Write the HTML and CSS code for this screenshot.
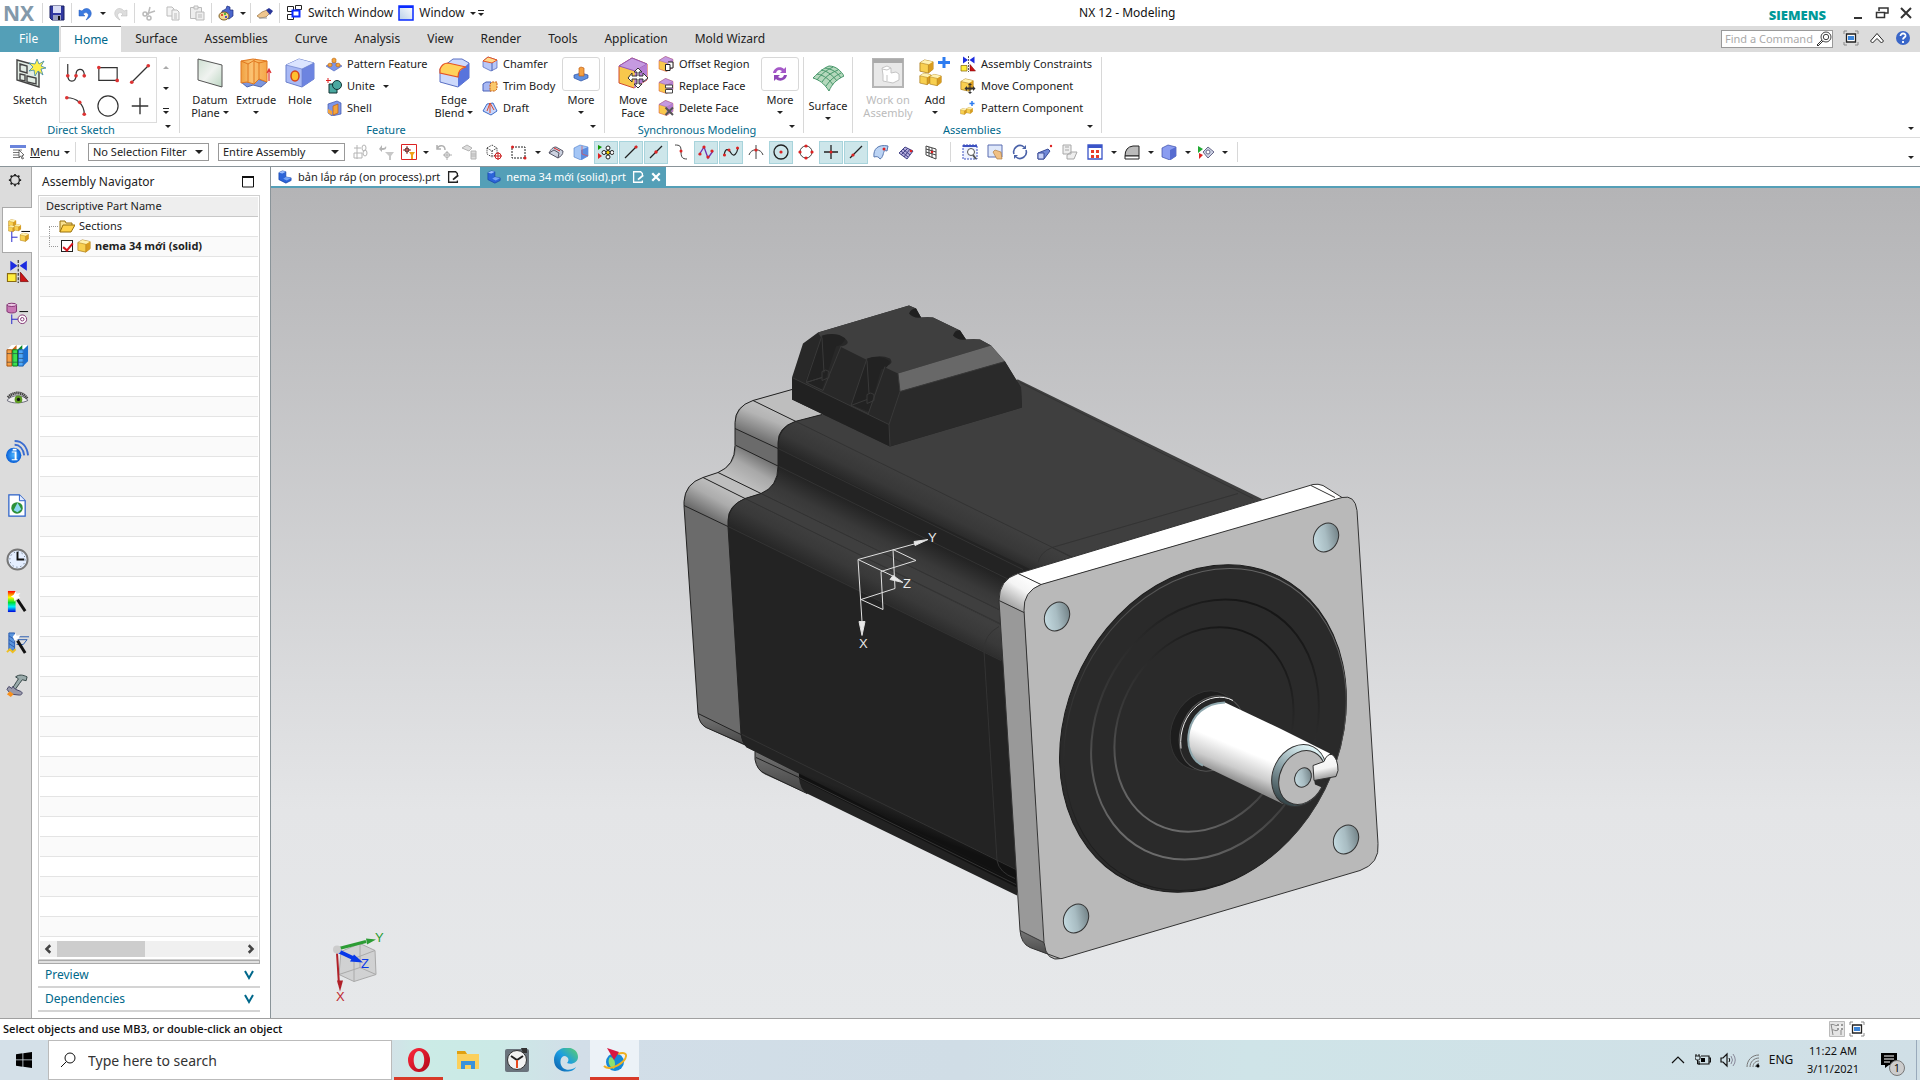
FILE: index.html
```html
<!DOCTYPE html>
<html lang="en">
<head>
    <meta charset="utf-8">
    <title>NX 12 - Modeling</title>
    <link rel="stylesheet" href="styles.css">
</head>
<body>

    <!-- icon sprite -->
    <svg class="sprite" aria-hidden="true">
        <defs>
            <linearGradient id="gGold" x1="0" y1="0" x2="1" y2="1"><stop offset="0" stop-color="#fff0a8"/><stop offset="1" stop-color="#eaa22c"/></linearGradient>
            <linearGradient id="gOrange" x1="0" y1="0" x2="1" y2="0"><stop offset="0" stop-color="#f0a040"/><stop offset=".4" stop-color="#fbc272"/><stop offset="1" stop-color="#f5a84a"/></linearGradient>
            <linearGradient id="gRain" x1="0" y1="0" x2="0" y2="1"><stop offset="0" stop-color="#f00"/><stop offset=".3" stop-color="#ff0"/><stop offset=".55" stop-color="#0d3"/><stop offset=".75" stop-color="#0ef"/><stop offset="1" stop-color="#00d"/></linearGradient>
            <linearGradient id="gPlane" x1="0" y1="0" x2="1" y2="1"><stop offset="0" stop-color="#cfe0d2"/><stop offset=".5" stop-color="#f0f3f0"/><stop offset="1" stop-color="#bcd6c2"/></linearGradient>
            <linearGradient id="gEdge" x1="0" y1="1" x2="1" y2="0"><stop offset="0" stop-color="#0c59a4"/><stop offset=".5" stop-color="#1b9de2"/><stop offset="1" stop-color="#5fd068"/></linearGradient>
            <linearGradient id="gOpera" x1="0" y1="0" x2="1" y2="1"><stop offset="0" stop-color="#ff2a3c"/><stop offset="1" stop-color="#b00818"/></linearGradient>
            <linearGradient id="gWin" x1="0" y1="1" x2="1" y2="0"><stop offset="0" stop-color="#b8cfe8"/><stop offset="1" stop-color="#fff"/></linearGradient>
            <radialGradient id="gInfo"><stop offset="0" stop-color="#49b4ff"/><stop offset="1" stop-color="#0a5fd6"/></radialGradient>
        </defs>

        <symbol id="save" viewBox="0 0 16 16"><path d="M1 1h14v14H3l-2-2z" fill="#3038a0" stroke="#1a2060"/><path d="M4 1h8v7H4z" fill="#d8dcf4"/><path d="M4 10h8v5H4z" fill="#9aa0c0"/><path d="M9 11h2v4H9z" fill="#111"/></symbol>
        <symbol id="undo" viewBox="0 0 16 16"><path d="M4 6c3-4 8-3 9 1 1 3-1 6-5 8 3-4 3-6 1-7-1-1-3 0-4 1l2 2-6 0V5z" fill="#3a7ae0" stroke="#2558b8" stroke-width=".5"/></symbol>
        <symbol id="redo" viewBox="0 0 16 16"><path d="M12 6C9 2 4 3 3 7c-1 3 1 6 5 8-3-4-3-6-1-7 1-1 3 0 4 1l-2 2h6V5z" fill="#ddd" stroke="#bbb" stroke-width=".5"/></symbol>
        <symbol id="cut" viewBox="0 0 16 16"><g fill="none" stroke="#bbb" stroke-width="1.500"><path d="M9 2L7 10M14 6L5 9"/><circle cx="4" cy="9" r="2"/><circle cx="8" cy="13" r="2"/></g></symbol>
        <symbol id="copy" viewBox="0 0 16 16"><g fill="#f4f4f4" stroke="#bbb"><path d="M2 2h5l2 2v7H2z"/><path d="M7 5h5l2 2v8H7z"/><path d="M9 9h3M9 11h3M9 13h3"/></g></symbol>
        <symbol id="paste" viewBox="0 0 16 16"><g fill="#eee" stroke="#bbb"><path d="M1.500 2.500h11v11h-11z"/><path d="M5 1h4v3H5zM7 7h8v8H7z"/><path d="M9 10h4M9 12h4"/></g></symbol>
        <symbol id="cyl" viewBox="0 0 16 16"><path d="M9 1l3 1v3h3v6l-4 3-7-3V6l4-2z" fill="#4a66cc" stroke="#1c2c80" stroke-width=".7"/><ellipse cx="6" cy="11" rx="5" ry="4" fill="#f0d890" stroke="#7a5a20"/><circle cx="4" cy="10" r="1" fill="#d22"/><circle cx="7" cy="9" r="1" fill="#2a2"/><circle cx="8" cy="12" r="1" fill="#22c"/></symbol>
        <symbol id="hand" viewBox="0 0 16 16"><path d="M0 11l5-4 5-2 3 3-4 4-6 1z" fill="#efc68e" stroke="#97703f" stroke-width=".7"/><path d="M9 5l3-2 4 3-3 4z" fill="#2a3798"/><path d="M2 13h8" stroke="#999"/></symbol>
        <symbol id="switch" viewBox="0 0 16 16"><g fill="#fff" stroke="#222"><path d="M.5 1.500h6v5h-6zM.5 9.500h6v5h-6zM8.500.500h6v4h-6z"/><path d="M5.500 5.500h7v6h-7z" stroke="#0a2bff" stroke-width="2"/></g></symbol>
        <symbol id="win" viewBox="0 0 16 16"><path d="M1 1h14v14H1z" fill="url(#gWin)" stroke="#0a2bff" stroke-width="1.500"/><path d="M1 1h14v2H1z" fill="#0a2bff"/></symbol>

        <symbol id="sketch" viewBox="0 0 32 32"><path d="M3 3l22 6v21L3 23z" fill="#e2ece4" stroke="#444" stroke-width="1.400"/><path d="M6 7l7 2v7l-7-2zM6 17l5 1v6l-5-1zM13 19l9 2v6l-9-2z" fill="none" stroke="#444" stroke-width="1.400"/><path d="M23 2l2 5 5-3-3 5 5 2-5 1 2 6-5-4-3 5-1-6-5 1 4-4-4-4 6 1z" fill="#fff04a" stroke="#3b88a8" stroke-width=".8"/></symbol>
        <symbol id="profile" viewBox="0 0 24 24"><path d="M3 1v12c0 9 9 9 9 0 0-8 8-8 9-1v2" fill="none" stroke="#333" stroke-width="1.300"/><circle cx="3" cy="14" r="2" fill="#d33"/><circle cx="12" cy="14" r="2" fill="#d33"/><circle cx="21" cy="14" r="2" fill="#d33"/></symbol>
        <symbol id="rect" viewBox="0 0 24 24"><path d="M2 5h20v14H2z" fill="none" stroke="#333" stroke-width="1.300"/><circle cx="2" cy="5" r="2" fill="#d33"/><circle cx="22" cy="19" r="2" fill="#d33"/></symbol>
        <symbol id="line" viewBox="0 0 24 24"><path d="M3 21L21 3" fill="none" stroke="#333" stroke-width="1.300"/><circle cx="3" cy="21" r="2" fill="#d33"/><circle cx="21" cy="3" r="2" fill="#d33"/></symbol>
        <symbol id="arc" viewBox="0 0 24 24"><path d="M2 3c11 0 19 7 19 18" fill="none" stroke="#333" stroke-width="1.300"/><circle cx="2" cy="3" r="2" fill="#d33"/><circle cx="16" cy="8" r="2" fill="#d33"/><circle cx="21" cy="21" r="2" fill="#d33"/></symbol>
        <symbol id="circle" viewBox="0 0 24 24"><circle cx="12" cy="12" r="11" fill="none" stroke="#333" stroke-width="1.300"/></symbol>
        <symbol id="point" viewBox="0 0 24 24"><path d="M12 3v18M3 12h18" stroke="#333" stroke-width="1.500"/></symbol>
        <symbol id="datum" viewBox="0 0 32 32"><path d="M4 2l24 6v22L4 23z" fill="url(#gPlane)" stroke="#555"/></symbol>
        <symbol id="extrude" viewBox="0 0 32 32"><path d="M1 25l13-4 13 4-6 5-8-2-6 2z" fill="#7d96dc" stroke="#5068b0"/><path d="M1 4l12-2 14 2v21l-8-3-5 5-7-2-6 1z" fill="url(#gOrange)" stroke="#e07820"/><path d="M1 4l7 3 5-3 3-2M8 7v19M14 4v22M19 5v17M14 4l5 2 8-2" fill="none" stroke="#e07820"/><path d="M29 24V13m-2 3l2-4 2 4" fill="none" stroke="#d33" stroke-width="1.200"/></symbol>
        <symbol id="cube" viewBox="0 0 32 32"><path d="M2 8l13-6 15 4v16l-12 8-16-5z" fill="#a9b9f4" stroke="#6b80cc"/><path d="M2 8l13-6 15 4-12 6z" fill="#dbe4ff"/><path d="M18 12l12-6v16l-12 8z" fill="#6d84e0"/><path d="M2 8l16 4v18M18 12l12-6" fill="none" stroke="#6b80cc" stroke-width=".7"/></symbol>
        <symbol id="hole" viewBox="0 0 32 32"><use href="#cube"/><ellipse cx="11" cy="19" rx="4" ry="5" fill="#ffc02e" stroke="#d84318" stroke-width="1.500"/></symbol>
        <symbol id="blend" viewBox="0 0 32 32"><path d="M2 12L15 2h9l7 4v15l-11 9L2 25z" fill="#cdd9fb" stroke="#5a70c4"/><path d="M20 16L31 6v15l-11 9z" fill="#5874dc"/><path d="M2 12c2-5 5-6 8-6l18 4c-5 1-8 4-8 10L2 16z" fill="#ffd25c" stroke="#e65324" stroke-width="1.200"/></symbol>
        <symbol id="pattern" viewBox="0 0 16 16"><path d="M0 10l8-4 8 4-8 5z" fill="#7d96e8" stroke="#4b62b8" stroke-width=".6"/><g fill="#f4a43c" stroke="#b86410" stroke-width=".6"><path d="M6 3l2-1 2 1v3L8 7 6 6zM2 8l2-1 2 1v2l-2 1-2-1zM10 8l2-1 2 1v2l-2 1-2-1z"/></g></symbol>
        <symbol id="unite" viewBox="0 0 16 16"><path d="M3 6h8v9H3z" fill="#4aa8a0" stroke="#133"/><circle cx="11" cy="7" r="4.500" fill="#4aa8a0" stroke="#133"/><path d="M2 0v5M0 2.500h5" stroke="#d22"/></symbol>
        <symbol id="shell" viewBox="0 0 16 16"><path d="M2 4l9-3 4 2v11l-9 2-4-3z" fill="#7d96e8" stroke="#3d53a8" stroke-width=".7"/><path d="M7 6l5-2v9l-5 2z" fill="#f4a43c" stroke="#b8601a" stroke-width=".7"/><path d="M2 9l4 2v4l-4-2z" fill="#f4a43c"/></symbol>
        <symbol id="chamfer" viewBox="0 0 16 16"><path d="M1 5l5-4 9 3v8l-6 3-8-4z" fill="#b8c7f8" stroke="#4b62b8" stroke-width=".7"/><path d="M1 5l5-4 9 3-5 3z" fill="#ffd98a" stroke="#e65324"/><path d="M10 7v8" stroke="#4b62b8"/></symbol>
        <symbol id="trim" viewBox="0 0 16 16"><path d="M1 6l3-2h5v9H1z" fill="#a9b9f4" stroke="#4b62b8"/><path d="M8 6l2-2h5v7l-2 2H8z" fill="#fac86c" stroke="#c65a14" stroke-dasharray="2 1"/></symbol>
        <symbol id="draft" viewBox="0 0 16 16"><path d="M1 11L5 4l6-1 4 8-6 4z" fill="#c8d6fc" stroke="#3d6cc8"/><path d="M8 3v10M8 3l-3 8M8 3l4 7" stroke="#e04a28" fill="none"/></symbol>
        <symbol id="boss" viewBox="0 0 16 16"><path d="M1 9l7-2 7 2v3l-7 3-7-3z" fill="#5f8fdf" stroke="#2b4fa0" stroke-width=".7"/><path d="M6 2l2-1 3 1v8H6z" fill="#f5a142" stroke="#c06018" stroke-width=".7"/></symbol>

        <symbol id="mface" viewBox="0 0 32 32"><path d="M2 9l13-8 15 6v16l-13 8L2 26z" fill="#f8c84c" stroke="#d04a30"/><path d="M2 9l13-8 15 6-12 7z" fill="#c59ae0" stroke="#9458b8"/><path d="M18 14l12-7v16l-13 8z" fill="#b47cd4"/></symbol>
        <symbol id="moveface" viewBox="0 0 32 32"><use href="#mface"/><path d="M21 11l4 4h-3v4h4v-3l5 5-5 4v-3h-4v5h3l-4 4-4-4h3v-5h-5v3l-4-4 4-5v3h5v-4h-3z" fill="#fff" stroke="#333"/></symbol>
        <symbol id="offset" viewBox="0 0 32 32"><use href="#mface"/><path d="M15 17h9v12h-9zM20 12h10v12h-6" fill="#fff" stroke="#222" stroke-width="2"/></symbol>
        <symbol id="replace" viewBox="0 0 32 32"><use href="#mface"/><path d="M15 14h14v6H15zM15 23h14v7H15z" fill="#fff" stroke="#444" stroke-width="2"/></symbol>
        <symbol id="delface" viewBox="0 0 32 32"><use href="#mface"/><path d="M15 15l15 15M30 15L15 30" stroke="#555" stroke-width="4"/></symbol>
        <symbol id="cycle" viewBox="0 0 16 16"><path d="M1 7c1-6 8-7 11-4l2-2v6H8l2-2c-3-2-5-1-6 2z" fill="#a558c8"/><path d="M15 9c-1 6-8 7-11 4l-2 2V9h6l-2 2c3 2 5 1 6-2z" fill="#9048b8"/></symbol>
        <symbol id="surf" viewBox="0 0 32 32"><path d="M1 15C8 8 12 5 17 3c7 0 12 5 15 10-8 4-12 8-15 15C12 20 7 17 1 15z" fill="#b4d8bc" stroke="#46966a"/><path d="M5 11c7 1 13 6 16 11M9 7c7 1 12 6 16 11M13 5c7 1 12 4 16 10M5 17C10 10 15 7 21 4M10 19c4-6 9-9 16-12M14 23c4-6 9-10 15-13" fill="none" stroke="#46966a"/></symbol>
        <symbol id="workon" viewBox="0 0 32 32"><path d="M1 2h30v28H1z" fill="#e8e8e8" stroke="#b5b5b5" stroke-width="2"/><path d="M1 2h30v4H1z" fill="#aaa"/><path d="M10 11l5-2 4 2v5l5-1 3 2v6l-6 3-10-2V18z" fill="#fff" stroke="#c4c4c4"/><path d="M15 18v6M10 12l5 1 4-2" stroke="#c4c4c4" fill="none"/></symbol>
        <symbol id="gcube" viewBox="0 0 16 16"><path d="M1 4l5-3 9 2v8l-5 4-9-2z" fill="#f8d050" stroke="#a87818" stroke-width=".8"/><path d="M1 4l5-3 9 2-5 3z" fill="#fff2b0"/><path d="M10 6l5-3v8l-5 4z" fill="#d89c20"/><path d="M1 4l9 2v9" fill="none" stroke="#a87818" stroke-width=".6"/></symbol>
        <symbol id="add" viewBox="0 0 32 32"><use href="#gcube" x="0" y="2" width="15" height="15"/><use href="#gcube" x="0" y="15" width="13" height="14"/><use href="#gcube" x="10" y="16" width="13" height="14"/><path d="M25 0v11M19 5.500h12" stroke="#2e7cf0" stroke-width="3"/></symbol>
        <symbol id="constr" viewBox="0 0 32 32"><path d="M6 1l10 7-10 7zM29 1L19 8l10 7z" fill="#1c2ce0"/><path d="M17 0v32" stroke="#222" stroke-width="1.500" stroke-dasharray="4 2"/><path d="M2 19h12v11H2z" fill="#ffee3c" stroke="#8a6a10" stroke-width="1.500"/><path d="M20 17v13h11z" fill="#cc1414" stroke="#700"/></symbol>
        <symbol id="movecomp" viewBox="0 0 16 16"><use href="#gcube" width="14" height="14"/><path d="M10 5l2 2h-1.500v2.500H13V8l2.500 2.500L13 13v-1.500h-2.500V14H12l-2 2-2-2h1.500v-2.500H7V13l-2.500-2.500L7 8v1.500h2.500V7H8z" fill="#333"/></symbol>
        <symbol id="pattcomp" viewBox="0 0 16 16"><use href="#gcube" y="8" width="7" height="7"/><use href="#gcube" x="6" y="7" width="7" height="7"/><path d="M12 1v5M9.500 3.500h5" stroke="#2e7cf0" stroke-width="1.500"/></symbol>

        <symbol id="menu" viewBox="0 0 16 16"><path d="M0 1h16v3H0z" fill="#6a84dc"/><path d="M3 6h9M3 8.500h7M3 11h7M3 13.500h7" stroke="#777"/><path d="M9 6l5 5-2 .5 1.500 3-1.500.5-1-3-2 1z" fill="#fff" stroke="#333" stroke-width=".7"/></symbol>
        <symbol id="s1" viewBox="0 0 16 16"><g fill="none" stroke="#b4b4b4"><path d="M1 4h7M4 1v14M1 9h8v5H1z"/><ellipse cx="11" cy="4" rx="2" ry="3"/><ellipse cx="12" cy="9" rx="2" ry="3"/></g></symbol>
        <symbol id="s2" viewBox="0 0 16 16"><path d="M1 5l3-4v3c2 0 3 0 4-2 1 3-1 4-4 4v2z" fill="#b4b4b4"/><path d="M7 8h9l-3 4v4h-2v-4z" fill="#c8c8c8"/></symbol>
        <symbol id="s3" viewBox="0 0 16 16"><path d="M.5.500h15v15H.500z" fill="#fff" stroke="#d22"/><path d="M6 2v8M2 6h8" stroke="#a22"/><circle cx="6" cy="6" r="2" fill="none" stroke="#422"/><path d="M8 8h6l-2 3v4h-2v-4z" fill="#f0a018"/></symbol>
        <symbol id="s4" viewBox="0 0 16 16"><path d="M1 5c2-5 8-4 8 1M1 1v4h4" stroke="#b0b0b0" stroke-width="1.500" fill="none"/><path d="M11 7v9M7 11h9" stroke="#b0b0b0"/><circle cx="11" cy="11" r="2.500" fill="none" stroke="#b0b0b0"/></symbol>
        <symbol id="s5" viewBox="0 0 16 16"><path d="M1 4l5-3 5 3-3 3zM10 7h5v8h-5zM10 10h5M10 12h5" fill="#ddd" stroke="#b4b4b4"/></symbol>
        <symbol id="s6" viewBox="0 0 16 16"><path d="M1 4l5-3 5 3v6l-5 3-5-3zM1 4l5 3 5-3M6 7v6" fill="none" stroke="#222" stroke-dasharray="1 1"/><circle cx="12" cy="12" r="3" fill="#fff" stroke="#c22"/><path d="M12 8v8M8 12h8" stroke="#c22"/></symbol>
        <symbol id="s7" viewBox="0 0 16 16"><path d="M1 3h13v11H1z" fill="none" stroke="#222" stroke-dasharray="2 1"/><circle cx="1.500" cy="3" r="1.500" fill="#d22"/><circle cx="14" cy="14" r="1.500" fill="#d22"/></symbol>
        <symbol id="s8" viewBox="0 0 16 16"><path d="M1 9c2-4 4-6 7-6l7 4c0 4-2 5-5 7z" fill="#ccd2e0" stroke="#556"/><path d="M1 9l5-3 5 3-1 5" fill="none" stroke="#556"/><path d="M6 4l6 3" stroke="#d22"/></symbol>
        <symbol id="s9" viewBox="0 0 16 16"><path d="M1 4l6-3 8 2v9l-7 4-7-3z" fill="#a4c6f6" stroke="#4878c8" stroke-width=".6"/><path d="M8 6l7-3v9l-7 4z" fill="#5c8ce0"/><path d="M9 2v8M9 10l6 2" stroke="#e05050" stroke-width=".7"/></symbol>
        <symbol id="s10" viewBox="0 0 16 16"><path d="M0 1l4 2-4 3z" fill="#190"/><path d="M0 9l4 3-4 3z" fill="#d22"/><g fill="#fff" stroke="#222"><circle cx="10" cy="4" r="2"/><circle cx="10" cy="13" r="2"/><circle cx="6" cy="8.500" r="2"/><circle cx="14" cy="8.500" r="2"/></g><circle cx="10" cy="8.500" r="2" fill="#fd0" stroke="#222"/></symbol>
        <symbol id="s11" viewBox="0 0 16 16"><path d="M2 14L14 2" stroke="#222" stroke-width="1.200"/><circle cx="13" cy="3" r="1.600" fill="#d22"/></symbol>
        <symbol id="s12" viewBox="0 0 16 16"><path d="M2 14L14 2" stroke="#222" stroke-width="1.200"/><circle cx="8" cy="8" r="1.700" fill="#d22"/></symbol>
        <symbol id="s13" viewBox="0 0 16 16"><path d="M2 1c5 0 6 1 6 6 0 6 1 8 6 8" stroke="#444" fill="none"/><circle cx="8" cy="7" r="1.500" fill="#d22"/></symbol>
        <symbol id="s14" viewBox="0 0 16 16"><path d="M1 11L6 3l4 11 5-7" stroke="#7030b0" fill="none" stroke-width="1.300"/><g fill="#d22"><circle cx="2" cy="10" r="1.600"/><circle cx="6" cy="3" r="1.600"/><circle cx="10" cy="13" r="1.600"/><circle cx="14" cy="7" r="1.600"/></g></symbol>
        <symbol id="s15" viewBox="0 0 16 16"><path d="M1 12C2 4 5 4 8 9s6 0 7-5" stroke="#222" fill="none" stroke-width="1.200"/><g fill="#d22"><circle cx="1.500" cy="11" r="1.500"/><circle cx="6" cy="6" r="1.500"/><circle cx="14.500" cy="4" r="1.500"/></g></symbol>
        <symbol id="s16" viewBox="0 0 16 16"><path d="M1 11c2-7 12-7 14 0M8 1v14" stroke="#444" fill="none"/><circle cx="8" cy="6" r="1.600" fill="#d22"/></symbol>
        <symbol id="s17" viewBox="0 0 16 16"><circle cx="8" cy="8" r="7" stroke="#222" fill="none" stroke-width="1.300"/><circle cx="8" cy="8" r="1.600" fill="#d22"/></symbol>
        <symbol id="s18" viewBox="0 0 16 16"><circle cx="8" cy="8" r="6" stroke="#444" fill="none"/><g fill="#d22"><circle cx="8" cy="2" r="1.600"/><circle cx="8" cy="14" r="1.600"/><circle cx="2" cy="8" r="1.600"/><circle cx="14" cy="8" r="1.600"/></g></symbol>
        <symbol id="s19" viewBox="0 0 16 16"><path d="M8 1v14M1 8h14" stroke="#222" stroke-width="1.300"/><circle cx="8" cy="8" r="1.500" fill="#d22"/></symbol>
        <symbol id="s20" viewBox="0 0 16 16"><path d="M2 14L14 2" stroke="#222" stroke-width="1.200"/><circle cx="5" cy="11" r="1.600" fill="#d22"/></symbol>
        <symbol id="s21" viewBox="0 0 16 16"><path d="M1 13C0 5 5 0 15 2l-1 5c-3-1-3 0-4 4-1 2-1 3-3 4-1-2-3-3-6-2z" fill="#bcd4f4" stroke="#5878b0"/><circle cx="11" cy="5" r="1.500" fill="#d22"/></symbol>
        <symbol id="s22" viewBox="0 0 16 16"><path d="M1 9l6-6 8 4-6 8z" fill="#b4acdc" stroke="#448"/><path d="M3 7l7 6M5 5l7 6M3 11l7-7M6 13l6-8" stroke="#448"/><circle cx="13" cy="7" r="1.300" fill="#d22"/></symbol>
        <symbol id="s23" viewBox="0 0 16 16"><path d="M3 2l10 3v10L3 11zM6 3v9M9 4v10M3 5l10 3M3 8l10 3" stroke="#444" fill="none"/><circle cx="9" cy="8" r="1.300" fill="#d22"/></symbol>
        <symbol id="v1" viewBox="0 0 16 16"><path d="M1 1h14v14H1z" fill="#eef2ff" stroke="#3c50c0" stroke-dasharray="2 1"/><path d="M1 1h14v2H1z" fill="#3c50c0"/><circle cx="9" cy="8" r="3.500" fill="#fff" stroke="#555"/><path d="M11 11l3 4" stroke="#555" stroke-width="2"/></symbol>
        <symbol id="v2" viewBox="0 0 16 16"><path d="M1 1h14v12H1z" fill="#dfe8fa" stroke="#5a6cb0"/><path d="M6 8l2-2 6 2 1 7h-5z" fill="#f0c084" stroke="#a87030" stroke-width=".6"/></symbol>
        <symbol id="v3" viewBox="0 0 16 16"><path d="M2 10C0 4 7-1 12 3M14 6c2 6-5 11-10 7" fill="none" stroke="#4a62a8" stroke-width="1.600"/><path d="M10 5h4V1zM6 11H2v4z" fill="#4a62a8"/></symbol>
        <symbol id="v4" viewBox="0 0 16 16"><path d="M1 9l10-4 2 2-6 8H1z" fill="#7088d8" stroke="#3a4c98"/><path d="M1 9h6v6H1z" fill="#c8d2f8" stroke="#3a4c98"/><circle cx="14" cy="2" r="1.200" fill="#d22"/></symbol>
        <symbol id="v5" viewBox="0 0 16 16"><path d="M1 1h8v9H1zM5 11l4-3h6l-3 7H5zM3 3h4M3 6h4" fill="#eee" stroke="#a8a8a8"/></symbol>
        <symbol id="v6" viewBox="0 0 16 16"><path d="M1 1h14v14H1z" fill="#fff" stroke="#3a54c8" stroke-width="1.300"/><path d="M1 1h14v3H1z" fill="#3a54c8"/><path d="M4 6h3v3H4zM9 6h3v3H9zM4 11h3v3H4zM9 11h3v3H9z" fill="#e83a28"/></symbol>
        <symbol id="v7" viewBox="0 0 16 16"><path d="M1 12q0-9 8-10h6v10z" fill="#bbb" stroke="#222"/><path d="M1 12h14v3H1z" fill="#fff" stroke="#222"/></symbol>
        <symbol id="v8" viewBox="0 0 16 16"><path d="M1 4l6-3 8 2v9l-6 4-8-3z" fill="#8a9cf0" stroke="#3a4ca8" stroke-width=".7"/><path d="M9 6l6-3v9l-6 4z" fill="#566cd0"/></symbol>
        <symbol id="v9" viewBox="0 0 16 16"><path d="M0 2l5 3-5 4z" fill="#2a3"/><path d="M1 9l4 2-4 4z" fill="#d22"/><path d="M5 8l5-5 6 5-6 6z" fill="#ccd2e4" stroke="#668"/><circle cx="10" cy="8" r="2" fill="#fff" stroke="#668"/></symbol>

        <symbol id="gear" viewBox="0 0 16 16"><circle cx="8" cy="8" r="5" fill="none" stroke="#222" stroke-width="1.500"/><path d="M8 1v2M8 13v2M1 8h2M13 8h2M3 3l1.500 1.500M11.500 11.500L13 13M3 13l1.500-1.500M11.500 4.500L13 3" stroke="#222" stroke-width="2"/></symbol>
        <symbol id="asmnav" viewBox="0 0 24 24"><use href="#gcube" x="1" y="0" width="9" height="9"/><use href="#gcube" x="1" y="6" width="8" height="8"/><use href="#gcube" x="7" y="5" width="8" height="8"/><use href="#gcube" x="13" y="14" width="10" height="10"/><path d="M5 13v11M5 19h6" stroke="#22c" fill="none"/><path d="M15 13h9" stroke="#000"/></symbol>
        <symbol id="partnav" viewBox="0 0 24 24"><path d="M1 3v7c2 2 8 2 10 0V3z" fill="#c878b4" stroke="#803070"/><ellipse cx="6" cy="3" rx="5" ry="1.700" fill="#ecc8e4" stroke="#803070"/><path d="M6 13v10M6 18h7" stroke="#22c"/><path d="M14 10h9" stroke="#000"/><circle cx="17" cy="18" r="4.500" fill="#fff" stroke="#803070"/><circle cx="17" cy="18" r="1.800" fill="none" stroke="#803070"/></symbol>
        <symbol id="books" viewBox="0 0 24 24"><path d="M1 6l5-5h17v17l-6 5H1z" fill="#fff"/><path d="M1 6h5v17H1z" fill="#f4a048" stroke="#a85008"/><path d="M6 6l5-5v4l-5 5z" fill="#c86818"/><path d="M7 6h5v17H7z" fill="#3ce050" stroke="#087818"/><path d="M12 6l5-5v4l-5 5z" fill="#0c8828"/><path d="M13 6h5v17h-5z" fill="#50a8f8" stroke="#1458a8"/><path d="M18 6l5-5v17l-5 5z" fill="#1c70d0"/><path d="M1 10h5M7 10h5M13 10h5M1 19h5M7 19h5M13 15h5M13 19h5" stroke="#234" stroke-opacity=".6"/></symbol>
        <symbol id="eye" viewBox="0 0 24 24"><path d="M1 15C6 9 17 8 23 15c-5 3-17 4-22 0z" fill="#eee" stroke="#667"/><path d="M2 12C7 6 17 5 22 13" fill="none" stroke="#444" stroke-width="3" stroke-dasharray="1.500 .5"/><circle cx="13" cy="14" r="4" fill="#5c9a20"/><circle cx="13" cy="14" r="1.700" fill="#111"/></symbol>
        <symbol id="info" viewBox="0 0 24 24"><circle cx="8" cy="16" r="8" fill="url(#gInfo)"/><path d="M6 13h3v7H6v1h6v-1h-1v-8H6zM7 9h4v2H7z" fill="#fff"/><path d="M9 5c5 0 9 4 10 11M9 1c8 0 13 6 14 15" stroke="#3a6cd0" stroke-width="2" fill="none"/></symbol>
        <symbol id="webdoc" viewBox="0 0 24 24"><path d="M3 1h11l6 6v16H3z" fill="#fff" stroke="#2a60c8" stroke-width="1.300"/><path d="M14 1v6h6" fill="#e0eaff" stroke="#2a60c8"/><circle cx="11.500" cy="14.500" r="6" fill="#2c9038"/><path d="M12 9l4 7-4 3-4-2z" fill="#8cd8f0"/></symbol>
        <symbol id="clock" viewBox="0 0 24 24"><circle cx="12" cy="12" r="10.500" fill="#e4eeff" stroke="#777" stroke-width="2"/><path d="M12 4v8h7" fill="none" stroke="#111" stroke-width="2"/><circle cx="12" cy="12" r="8" fill="none" stroke="#456" stroke-dasharray="1 3.200"/></symbol>
        <symbol id="palette" viewBox="0 0 24 24"><path d="M2 1h8v22H2z" fill="url(#gRain)"/><path d="M10 1l1 3 4-1-2 3 2 2-4 1-2 3-1-4-3-1 3-2z" fill="#fff"/><path d="M12 10l8 12" stroke="#111" stroke-width="3"/></symbol>
        <symbol id="mill" viewBox="0 0 24 24"><path d="M3 1h6v18H3z" fill="#5a94dc" stroke="#2a5cb0"/><path d="M3 4l6 4M3 8l6 4M3 12l6 4M11 5h13M12 8h10l-4 5h-7" stroke="#2a5cb0" fill="none"/><path d="M1 21l3-3 3 3 3-3" stroke="#f0c020" stroke-width="2" fill="none"/><path d="M10 1l1 3 4-1-2 4-4 2-2-4z" fill="#fff"/><path d="M12 9l8 13" stroke="#111" stroke-width="3"/></symbol>
        <symbol id="tools" viewBox="0 0 24 24"><path d="M10 3c4-3 8-2 12 0l-1 4-4-1-3 4-5 7-3-1 5-8 2-3z" fill="#9aa" stroke="#344"/><path d="M1 16l2-3 3 2 1-2 3 3 5 2c3 1 2 4-1 4L5 21z" fill="#99a" stroke="#446"/><path d="M1 21l3-3 4 3-3 3z" fill="#f8901c"/></symbol>
        <symbol id="folder" viewBox="0 0 16 16"><path d="M1 14V3h5l1 2h6v3" fill="#f8e090" stroke="#98700c"/><path d="M1 14l3-7h12l-4 7z" fill="#ffd24a" stroke="#98700c"/></symbol>
        <symbol id="part" viewBox="0 0 16 16"><path d="M1 3l4-2 4 1v6l6 1v3l-6 3-8-4z" fill="#2c64d8" stroke="#1440a0" stroke-width=".7"/><path d="M1 3l4-2 4 1-4 2z" fill="#9cc0ff"/><path d="M6 10l3-2 6 1-5 3z" fill="#74a4f8"/></symbol>
        <symbol id="docedit" viewBox="0 0 16 16"><path d="M13 6V4l-2-2H3v12h10v-2" fill="none" stroke="currentColor" stroke-width="1.500"/><path d="M8 11l6-5" stroke="currentColor" stroke-width="2"/></symbol>
        <symbol id="full" viewBox="0 0 16 16"><path d="M1 4V1h3M12 1h3v3M15 12v3h-3M4 15H1v-3" fill="none" stroke="#888"/><path d="M3.500 4h9v8h-9z" fill="#fff" stroke="#222" stroke-width="1.300"/><path d="M5 6h6v4H5z" fill="#3a84d8"/></symbol>
        <symbol id="flag" viewBox="0 0 16 16"><path d="M.5.500h15v15H.500z" fill="#e4e4e4" stroke="#bbb"/><path d="M4 14L2 3M2 4c3-2 4 2 7 0v5c-3 2-4-1-6 0M12 14V4" fill="none" stroke="#888"/><path d="M8 3h6v6H8z" fill="#999"/><path d="M10 3h2v2h2v2h-2v2h-2V7H8V5h2z" fill="#eee"/></symbol>
        <symbol id="magnify" viewBox="0 0 16 16"><circle cx="10" cy="6" r="5" fill="none" stroke="#444"/><circle cx="10" cy="6" r="2.700" fill="none" stroke="#444"/><path d="M6 9l-5 5 1 1 5-5" fill="#fff" stroke="#333"/></symbol>
        <symbol id="help" viewBox="0 0 16 16"><circle cx="8" cy="8" r="7" fill="#3a66c8"/><path d="M5.500 6c0-3.500 5.500-3.200 5 0-.3 1.500-2.500 1.800-2.500 3.500M8 11v2" stroke="#fff" stroke-width="1.800" fill="none"/></symbol>
        <symbol id="collapse" viewBox="0 0 16 16"><path d="M1.500 11L8 3.500l6.500 7.500-2 2L8 8.500 3.500 13z" fill="#fff" stroke="#222"/></symbol>
        <symbol id="minimize" viewBox="0 0 16 16"><path d="M4 13h8" stroke="#333" stroke-width="2"/></symbol>
        <symbol id="restore" viewBox="0 0 16 16"><path d="M5 6V3h9v5h-3M2.500 7.500h8v5h-8z" fill="none" stroke="#333" stroke-width="1.500"/></symbol>
        <symbol id="close" viewBox="0 0 16 16"><path d="M3 3l10 10M13 3L3 13" stroke="#333" stroke-width="2"/></symbol>
        <symbol id="maxi" viewBox="0 0 16 16"><path d="M2.500 3h11v10h-11z" fill="none" stroke="#111" stroke-width="1"/><path d="M2 3h12" stroke="#111" stroke-width="2"/></symbol>

        <symbol id="start" viewBox="0 0 16 16"><path d="M0 2.300L6.500 1.300v6.200H0zM7.300 1.200L16 0v7.500H7.300zM0 8.300h6.500v6.400L0 13.700zM7.300 8.300H16V16l-8.700-1.200z"/></symbol>
        <symbol id="find" viewBox="0 0 16 16"><circle cx="10" cy="6" r="5" fill="none" stroke="#111"/><path d="M6.500 9.500L1 15" stroke="#111"/></symbol>
        <symbol id="opera" viewBox="0 0 24 24"><path fill-rule="evenodd" fill="url(#gOpera)" d="M12 0a11 12 0 1 1 0 24a11 12 0 1 1 0-24zm0 3c-7 0-7 18 0 18s7-18 0-18z"/></symbol>
        <symbol id="explorer" viewBox="0 0 24 24"><path d="M1 3h8l2 3h12v15H1z" fill="#fbd05c"/><path d="M1 3h8l2 3H1z" fill="#e0a010"/><path d="M5 13h14v8h-4v-4H9v4H5z" fill="#3a92dc"/></symbol>
        <symbol id="alarm" viewBox="0 0 24 24"><rect y="1" width="24" height="23" rx="2" fill="#6a737c"/><path d="M16 0h6v5h-4z" fill="#333"/><circle cx="12" cy="12" r="9.500" fill="#f2f2f2" stroke="#333"/><path d="M6 8l6 4 6-4" stroke="#222" stroke-width="2" fill="none"/><path d="M12 12v8" stroke="#e8481c" stroke-width="2"/></symbol>
        <symbol id="edge" viewBox="0 0 24 24"><path d="M0 12C0-4 24-4 24 9c0 6-7 8-11 6 3-3 1-7-3-7-4 1-5 8-1 12 4 3 9 2 13-1-3 7-22 7-22-7z" fill="url(#gEdge)"/></symbol>
        <symbol id="nx" viewBox="0 0 24 24"><circle cx="12" cy="14" r="9" fill="#1488d8"/><path d="M7 9c5 1 6 6 4 12-5-2-7-8-4-12z" fill="#8ce070"/><path d="M1 18C7 24 24 14 23 7c-1-3-6-2-8-1" fill="none" stroke="#f0b020" stroke-width="2"/><path d="M4 0l12 4-5 8z" fill="#d81840"/></symbol>
        <symbol id="up" viewBox="0 0 16 16"><path d="M2 11l6-6 6 6" fill="none" stroke="#111" stroke-width="1.200"/></symbol>
        <symbol id="battery" viewBox="0 0 16 16"><path d="M6 4h8v8H4V9M14 6h1.500v4H14" fill="none" stroke="#111" stroke-width="1.200"/><path d="M6 6h4v4H6z"/><path d="M0 4h5v2c0 2-1 2-2 2S0 8 0 6zM1 2v2M4 2v2M2.500 8v4H5" fill="none" stroke="#111"/></symbol>
        <symbol id="volume" viewBox="0 0 16 16"><path d="M1 6h2l4-4v12l-4-4H1z" fill="none" stroke="#111" stroke-width="1.200"/><path d="M9 6q1.500 2 0 4" fill="none" stroke="#111"/><path d="M11 4q3 4 0 8M13 2q4.500 6 0 12" fill="none" stroke="#889"/></symbol>
        <symbol id="wifi" viewBox="0 0 16 16"><path d="M2 15C2 8 7 3 14 3M5 15c0-5 4-9 9-9M8 15c0-4 3-6 6-6" fill="none" stroke="#777"/><path d="M11 15c0-2 1-3 3-3" fill="none" stroke="#111"/><circle cx="13" cy="14" r="1.500"/></symbol>
        <symbol id="note" viewBox="0 0 16 16"><path d="M0 1h16v12H8l-4 3v-3H0z"/><path d="M3 4h10M3 7h10M3 10h6" stroke="#fff"/></symbol>
    </svg>

    <header class="titlebar">
        <span class="logo">NX</span>
        <span class="vline"></span>
        <button class="tool" aria-label="Save"><svg><use href="#save"/></svg></button>
        <span class="vline"></span>
        <button class="tool" aria-label="Undo"><svg><use href="#undo"/></svg></button>
        <button class="drop" aria-label="Undo list"></button>
        <button class="tool" aria-label="Redo"><svg><use href="#redo"/></svg></button>
        <span class="vline"></span>
        <button class="tool" aria-label="Cut"><svg><use href="#cut"/></svg></button>
        <button class="tool" aria-label="Copy"><svg><use href="#copy"/></svg></button>
        <button class="tool" aria-label="Paste"><svg><use href="#paste"/></svg></button>
        <span class="vline"></span>
        <button class="tool" aria-label="Repeat Command"><svg><use href="#cyl"/></svg></button>
        <button class="drop" aria-label="Repeat list"></button>
        <span class="vline"></span>
        <button class="tool" aria-label="Touch"><svg><use href="#hand"/></svg></button>
        <span class="vline"></span>
        <button class="texttool"><svg><use href="#switch"/></svg>Switch Window</button>
        <button class="texttool"><svg><use href="#win"/></svg>Window<i class="caret"></i></button>
        <button class="drop bar" aria-label="Toolbar options"></button>
        <h1>NX 12 - Modeling</h1>
        <span class="siemens">SIEMENS</span>
        <button class="winbtn" aria-label="Minimize"><svg><use href="#minimize"/></svg></button>
        <button class="winbtn" aria-label="Restore"><svg><use href="#restore"/></svg></button>
        <button class="winbtn" aria-label="Close"><svg><use href="#close"/></svg></button>
    </header>

    <nav class="tabs">
        <a class="file" href="#file">File</a>
        <a class="active" href="#home">Home</a>
        <a href="#surface">Surface</a>
        <a href="#assemblies">Assemblies</a>
        <a href="#curve">Curve</a>
        <a href="#analysis">Analysis</a>
        <a href="#view">View</a>
        <a href="#render">Render</a>
        <a href="#tools-tab">Tools</a>
        <a href="#application">Application</a>
        <a href="#mold">Mold Wizard</a>
        <div class="finder">
            <input type="text" placeholder="Find a Command" aria-label="Find a Command">
            <svg><use href="#magnify"/></svg>
        </div>
        <button class="winbtn" aria-label="Full Screen"><svg><use href="#full"/></svg></button>
        <button class="winbtn" aria-label="Minimize Ribbon"><svg><use href="#collapse"/></svg></button>
        <button class="winbtn" aria-label="Help"><svg><use href="#help"/></svg></button>
    </nav>

    <section class="ribbon">
        <div class="group g-sketch">
            <div class="items">
                <button class="big w58"><svg><use href="#sketch"/></svg>Sketch</button>
                <div class="gallery">
                    <button aria-label="Profile"><svg><use href="#profile"/></svg></button>
                    <button aria-label="Rectangle"><svg><use href="#rect"/></svg></button>
                    <button aria-label="Line"><svg><use href="#line"/></svg></button>
                    <button aria-label="Arc"><svg><use href="#arc"/></svg></button>
                    <button aria-label="Circle"><svg><use href="#circle"/></svg></button>
                    <button aria-label="Point"><svg><use href="#point"/></svg></button>
                </div>
                <div class="scroller">
                    <button class="drop flip" aria-label="Scroll up"></button>
                    <button class="drop" aria-label="Scroll down"></button>
                    <button class="drop bar" aria-label="More shapes"></button>
                </div>
            </div>
            <div class="label">Direct Sketch<i class="caret"></i></div>
        </div>
        <div class="group g-feature">
            <div class="items">
                <button class="big w46"><svg><use href="#datum"/></svg>Datum<span>Plane<i class="caret"></i></span></button>
                <button class="big w46"><svg><use href="#extrude"/></svg>Extrude<i class="caret"></i></button>
                <button class="big w42"><svg><use href="#hole"/></svg>Hole</button>
                <div class="list l1">
                    <button><svg><use href="#pattern"/></svg>Pattern Feature</button>
                    <button><svg><use href="#unite"/></svg>Unite<i class="caret"></i></button>
                    <button><svg><use href="#shell"/></svg>Shell</button>
                </div>
                <button class="big w46"><svg><use href="#blend"/></svg>Edge<span>Blend<i class="caret"></i></span></button>
                <div class="list l2">
                    <button><svg><use href="#chamfer"/></svg>Chamfer</button>
                    <button><svg><use href="#trim"/></svg>Trim Body</button>
                    <button><svg><use href="#draft"/></svg>Draft</button>
                </div>
                <button class="big more"><svg><use href="#boss"/></svg>More<i class="caret"></i></button>
            </div>
            <div class="label">Feature<i class="caret"></i></div>
        </div>
        <div class="group g-sync">
            <div class="items">
                <button class="big w46"><svg><use href="#moveface"/></svg>Move<span>Face</span></button>
                <div class="list l3">
                    <button><svg><use href="#offset"/></svg>Offset Region</button>
                    <button><svg><use href="#replace"/></svg>Replace Face</button>
                    <button><svg><use href="#delface"/></svg>Delete Face</button>
                </div>
                <button class="big more"><svg><use href="#cycle"/></svg>More<i class="caret"></i></button>
            </div>
            <div class="label">Synchronous Modeling<i class="caret"></i></div>
        </div>
        <div class="group g-surface">
            <div class="items">
                <button class="big w48 lower"><svg><use href="#surf"/></svg>Surface<i class="caret"></i></button>
            </div>
        </div>
        <div class="group g-assy">
            <div class="items">
                <button class="big w52" disabled><svg><use href="#workon"/></svg>Work on<span>Assembly</span></button>
                <button class="big w42"><svg><use href="#add"/></svg>Add<i class="caret"></i></button>
                <div class="list l4">
                    <button><svg><use href="#constr"/></svg>Assembly Constraints</button>
                    <button><svg><use href="#movecomp"/></svg>Move Component</button>
                    <button><svg><use href="#pattcomp"/></svg>Pattern Component</button>
                </div>
            </div>
            <div class="label">Assemblies<i class="caret"></i></div>
        </div>
        <button class="drop end" aria-label="Ribbon options"></button>
    </section>

    <section class="selbar">
        <button class="texttool menu"><svg><use href="#menu"/></svg><span><u>M</u>enu</span><i class="caret"></i></button>
        <span class="vline"></span>
        <div class="pick p1"><select aria-label="Selection Filter"><option>No Selection Filter</option></select></div>
        <div class="pick p2"><select aria-label="Selection Scope"><option>Entire Assembly</option></select></div>
        <div class="icons">
            <button aria-label="Interpart Link"><svg><use href="#s1"/></svg></button>
            <button aria-label="Reset Filters"><svg><use href="#s2"/></svg></button>
            <button class="tight" aria-label="Selection Priority"><svg><use href="#s3"/></svg></button>
            <button class="drop" aria-label="Priority list"></button>
            <button aria-label="Restore Selection"><svg><use href="#s4"/></svg></button>
            <button aria-label="Top Selection Priority"><svg><use href="#s5"/></svg></button>
            <button aria-label="Allow Hidden"><svg><use href="#s6"/></svg></button>
            <button aria-label="Rectangle Select"><svg><use href="#s7"/></svg></button>
            <button class="drop" aria-label="Select list"></button>
            <button aria-label="Highlight Faces"><svg><use href="#s8"/></svg></button>
            <button aria-label="Highlight Bodies"><svg><use href="#s9"/></svg></button>
            <button class="on" aria-label="Enable Snap"><svg><use href="#s10"/></svg></button>
            <button class="on" aria-label="End Point"><svg><use href="#s11"/></svg></button>
            <button class="on" aria-label="Mid Point"><svg><use href="#s12"/></svg></button>
            <button aria-label="Control Point"><svg><use href="#s13"/></svg></button>
            <button class="on" aria-label="Pole"><svg><use href="#s14"/></svg></button>
            <button class="on" aria-label="Defining Point"><svg><use href="#s15"/></svg></button>
            <button aria-label="Intersection"><svg><use href="#s16"/></svg></button>
            <button class="on" aria-label="Arc Center"><svg><use href="#s17"/></svg></button>
            <button aria-label="Quadrant Point"><svg><use href="#s18"/></svg></button>
            <button class="on" aria-label="Existing Point"><svg><use href="#s19"/></svg></button>
            <button class="on" aria-label="Point on Curve"><svg><use href="#s20"/></svg></button>
            <button aria-label="Point on Face"><svg><use href="#s21"/></svg></button>
            <button aria-label="Facet Vertex"><svg><use href="#s22"/></svg></button>
            <button aria-label="Grid Point"><svg><use href="#s23"/></svg></button>
            <span class="vline"></span>
            <button aria-label="Fit"><svg><use href="#v1"/></svg></button>
            <button aria-label="Pan"><svg><use href="#v2"/></svg></button>
            <button aria-label="Rotate"><svg><use href="#v3"/></svg></button>
            <button aria-label="Perspective"><svg><use href="#v4"/></svg></button>
            <button aria-label="Orient View"><svg><use href="#v5"/></svg></button>
            <button aria-label="View Layout"><svg><use href="#v6"/></svg></button>
            <button class="drop" aria-label="Layout list"></button>
            <button aria-label="Background"><svg><use href="#v7"/></svg></button>
            <button class="drop" aria-label="Background list"></button>
            <button aria-label="Shaded"><svg><use href="#v8"/></svg></button>
            <button class="drop" aria-label="Rendering list"></button>
            <button aria-label="Show and Hide"><svg><use href="#v9"/></svg></button>
            <button class="drop" aria-label="Show list"></button>
            <span class="vline"></span>
        </div>
        <button class="drop end" aria-label="Selection bar options"></button>
    </section>

    <main class="workspace">
        <nav class="rail">
            <button class="cog" aria-label="Resource Bar Options"><svg><use href="#gear"/></svg></button>
            <button class="current" aria-label="Assembly Navigator"><svg><use href="#asmnav"/></svg></button>
            <button aria-label="Constraint Navigator"><svg><use href="#constr"/></svg></button>
            <button aria-label="Part Navigator"><svg><use href="#partnav"/></svg></button>
            <button aria-label="Reuse Library"><svg><use href="#books"/></svg></button>
            <button aria-label="View Manager"><svg><use href="#eye"/></svg></button>
            <button class="apart" aria-label="HD3D Tools"><svg><use href="#info"/></svg></button>
            <button class="apart" aria-label="Web Browser"><svg><use href="#webdoc"/></svg></button>
            <button class="apart" aria-label="History"><svg><use href="#clock"/></svg></button>
            <button aria-label="System Materials"><svg><use href="#palette"/></svg></button>
            <button aria-label="Process Studio"><svg><use href="#mill"/></svg></button>
            <button aria-label="Roles"><svg><use href="#tools"/></svg></button>
        </nav>

        <aside class="navigator">
            <div class="navhead">
                <h2>Assembly Navigator</h2>
                <button aria-label="Undock"><svg><use href="#maxi"/></svg></button>
            </div>
            <div class="tree">
                <table>
                    <thead><tr><th>Descriptive Part Name</th></tr></thead>
                    <tbody>
                        <tr><td><div class="node n1"><i class="branch"></i><svg><use href="#folder"/></svg>Sections</div></td></tr>
                        <tr><td><div class="node n2"><i class="branch"></i><input type="checkbox" id="nema" checked><svg><use href="#gcube"/></svg><label for="nema">nema 34 mới (solid)</label></div></td></tr>
                    </tbody>
                </table>
                <div class="rows"></div>
                <div class="hscroll">
                    <button aria-label="Scroll left"><svg viewBox="0 0 8 8"><path d="M5 1L2 4l3 3"/></svg></button>
                    <div class="track"><div class="thumb"></div></div>
                    <button aria-label="Scroll right"><svg viewBox="0 0 8 8"><path d="M3 1l3 3-3 3"/></svg></button>
                </div>
            </div>
            <div class="splitter"></div>
            <button class="fold">Preview<svg viewBox="0 0 12 12"><path d="M2 2l4 7 4-7"/></svg></button>
            <button class="fold">Dependencies<svg viewBox="0 0 12 12"><path d="M2 2l4 7 4-7"/></svg></button>
        </aside>

        <section class="graphics">
            <div class="docs">
                <a class="doc" href="#asm"><svg><use href="#part"/></svg>bản lắp ráp (on process).prt<svg><use href="#docedit"/></svg></a>
                <a class="doc open" href="#nema34"><svg><use href="#part"/></svg>nema 34 mới (solid).prt<svg><use href="#docedit"/></svg><svg class="x" viewBox="0 0 16 16"><path d="M3 3l10 10M13 3L3 13" stroke="#fff" stroke-width="3"/></svg></a>
            </div>
            <div class="canvas">
                <svg viewBox="271 188 1649 829" role="img" aria-label="Nema 34 motor">
                    <defs>
                        <linearGradient id="b1" gradientUnits="userSpaceOnUse" x1="870" y1="457" x2="854" y2="489"><stop offset="0" stop-color="#3f3f3f"/><stop offset=".5" stop-color="#383838"/><stop offset="1" stop-color="#232323"/></linearGradient>
                        <linearGradient id="b2" gradientUnits="userSpaceOnUse" x1="870" y1="511" x2="855" y2="541"><stop offset="0" stop-color="#232323"/><stop offset=".6" stop-color="#393939"/><stop offset="1" stop-color="#3f3f3f"/></linearGradient>
                        <linearGradient id="b3" gradientUnits="userSpaceOnUse" x1="870" y1="560" x2="852" y2="594"><stop offset="0" stop-color="#3f3f3f"/><stop offset=".4" stop-color="#393939"/><stop offset="1" stop-color="#232323"/></linearGradient>
                        <linearGradient id="b4" gradientUnits="userSpaceOnUse" x1="880" y1="802" x2="875" y2="815"><stop offset="0" stop-color="#232323"/><stop offset="1" stop-color="#111"/></linearGradient>
                        <linearGradient id="r1" gradientUnits="userSpaceOnUse" x1="770" y1="408" x2="757" y2="440"><stop offset="0" stop-color="#bebebe"/><stop offset=".3" stop-color="#b4b4b4"/><stop offset="1" stop-color="#6a6a6a"/></linearGradient>
                        <linearGradient id="r2" gradientUnits="userSpaceOnUse" x1="765" y1="457" x2="748" y2="486"><stop offset="0" stop-color="#6e6e6e"/><stop offset=".5" stop-color="#a8a8a8"/><stop offset="1" stop-color="#bebebe"/></linearGradient>
                        <linearGradient id="r3" gradientUnits="userSpaceOnUse" x1="724" y1="488" x2="708" y2="517"><stop offset="0" stop-color="#bebebe"/><stop offset=".4" stop-color="#acacac"/><stop offset="1" stop-color="#6a6a6a"/></linearGradient>
                        <linearGradient id="r4" x1="0" y1="0" x2="0" y2="1"><stop offset="0" stop-color="#777"/><stop offset="1" stop-color="#444"/></linearGradient>
                        <linearGradient id="f1" gradientUnits="userSpaceOnUse" x1="1030" y1="576" x2="1010" y2="608"><stop offset="0" stop-color="#fff"/><stop offset=".4" stop-color="#f4f4f4"/><stop offset="1" stop-color="#9a9a9a"/></linearGradient>
                        <linearGradient id="sh" gradientUnits="userSpaceOnUse" x1="1262" y1="722" x2="1237" y2="782"><stop offset="0" stop-color="#fff"/><stop offset=".5" stop-color="#fff"/><stop offset=".8" stop-color="#ccc"/><stop offset="1" stop-color="#8c8c8c"/></linearGradient>
                        <linearGradient id="ch" x1="1" y1="0" x2="0" y2="0"><stop offset="0" stop-color="#e4f8fa"/><stop offset=".5" stop-color="#8aa0a6"/><stop offset="1" stop-color="#344448"/></linearGradient>
                        <linearGradient id="ho" x1="1" y1="1" x2="0" y2="0"><stop offset="0" stop-color="#5e6c70"/><stop offset=".5" stop-color="#a8bcc2"/><stop offset="1" stop-color="#cfe6ec"/></linearGradient>
                        <linearGradient id="key" x1="0" y1="0" x2=".2" y2="1"><stop offset="0" stop-color="#fff"/><stop offset=".6" stop-color="#f4f4f4"/><stop offset="1" stop-color="#9a9a9a"/></linearGradient>
                        <linearGradient id="rim"><stop offset="0" stop-color="#1c1c1c"/><stop offset=".5" stop-color="#3c3c3c"/><stop offset="1" stop-color="#666"/></linearGradient>
                        <linearGradient id="groove"><stop offset="0" stop-color="#6c6c6c"/><stop offset=".4" stop-color="#3a3a3a"/><stop offset="1" stop-color="#161616"/></linearGradient>
                    </defs>

                    <!-- rear cover -->
                    <path d="M755 749v10q2 11 10 15l42 19v-24l-50-22z" fill="url(#r4)"/>
                    <path d="M792 389l-39 11q-18 6-18 22v23q0 20-17 27l-15 5q-18 6-19 24v4l14 208q1 10 8 14l41 18 90-200 60-140z" fill="#6b6b6b"/>
                    <path d="M792 389l-39 11 43 21 40-10z" fill="#bebebe"/>
                    <path d="M753 400q-18 6-18 28l43 20q0-20 18-27z" fill="url(#r1)"/>
                    <path d="M736 445q0 20-18 27l43 21q18-7 18-27z" fill="url(#r2)"/>
                    <path d="M718 472l-15 5 42 21 16-5z" fill="#bebebe"/>
                    <path d="M703 477q-18 6-19 28l44 21q0-21 17-28z" fill="url(#r3)"/>
                    <path d="M698 713q1 10 8 14l41 19-6-12z" fill="url(#r4)"/>
                    <path d="M792 389l-39 11q-18 6-18 22v23q0 20-17 27l-15 5q-18 6-19 24v4l14 208q1 10 8 14l41 18M753 400l43 21M735 428l43 20M736 445l43 21M718 472l43 21M703 477l42 21M684 505l44 21M698 713l43 21M755 751v8q2 11 10 14l42 20M756 757l43 20" fill="none" stroke="#222" stroke-width="1"/>

                    <!-- motor body -->
                    <path d="M799 769v8q1 12 8 16l210 102v-30z" fill="#222"/>
                    <path d="M822 414l-27 7q-17 6-17 21v24q0 20-17 27l-16 5q-17 7-17 22v6l13 208q1 8 6 13l270 135 60-250 181-133-245-120-100 20z" fill="#232323"/>
                    <path d="M822 414l-27 7 280 137 190-58-247-121z" fill="#3f3f3f"/>
                    <path d="M796 421q-18 6-18 27l255 122 40-14z" fill="url(#b1)"/>
                    <path d="M779 466q0 20-18 27l247 121 15-28z" fill="url(#b2)"/>
                    <path d="M761 493l-16 5 257 127v-14z" fill="#3f3f3f"/>
                    <path d="M745 498q-17 7-17 28l274 134v-35z" fill="url(#b3)"/>
                    <path d="M741 734q1 8 6 13l270 135v-13z" fill="url(#b4)"/>
                    <path d="M799 773l218 109v5L799 778z" fill="#111"/>
                    <g fill="none" stroke="#333">
                        <path d="M796 421l277 136M778 448l245 121M779 466l240 118M761 493l240 117M745 498l257 126M728 526l273 134M742 734l274 135M799 777l217 107"/>
                        <path d="M1020 382l233 116M1038 562q2-10 14-15l186-54M1052 547l18 9M999 626q-15 8-15 24l13 210q2 12 18 18"/>
                    </g>
                    <path d="M822 414l-27 7q-17 6-17 21v24q0 20-17 27l-16 5q-17 7-17 22v6l13 208q1 8 6 13" fill="none" stroke="#222"/>

                    <!-- connector box -->
                    <path d="M792 377l11-34 15-11 91-27 7 3 5 9h12l27 13 6 9h14l11 6 14 16 16 26 1 20-132 39-98-47z" fill="#282828"/>
                    <path d="M818 332l91-27 7 3 5 9q7-1 12 0l27 13 6 9q8-1 14 0l11 6-93 28-15-7q12-2 7-8-11-5-24 1l-26-13q13-2 4-9-12-3-23 0z" fill="#3f3f3f"/>
                    <path d="M898 373l93-28 14 16-105 30z" fill="#686868"/>
                    <path d="M792 377l97 47 1 22-98-47z" fill="#212121"/>
                    <path d="M900 391l105-30 16 26 1 20-132 39-1-22z" fill="#2a2a2a"/>
                    <path d="M909 313q2-5 7-5l5 9q-8 1-12-4zM953 335q2-6 7-5l6 9q-9 1-13-4z" fill="#202020"/>
                    <path d="M822 335q15-4 23 3-1 6-9 8l-14 43-17-7zM867 358q14-4 23 3-1 6-9 8l-12 42-18-7z" fill="#222"/>
                    <g fill="none" stroke="#393939">
                        <path d="M822 335l-16 47 16-5M822 337l2 35M841 346l-18 44M867 358l-16 47M867 360l2 33M885 366l-17 48M792 377l97 47 1 22M900 391l-11 33M898 373l2 18 105-30M822 371q4-3 7 0v6l-7 3zM867 394q4-3 7 0v6l-7 3z"/>
                        <path d="M822 377l-16 5 17 8M867 399l-16 6 17 8"/>
                    </g>

                    <!-- front flange -->
                    <path d="M1018 573l295-89q5-1 10 1l19 12-301 87z" fill="#fff"/>
                    <path d="M1018 573q-19 6-19 27l25 12q0-21 17-28z" fill="url(#f1)"/>
                    <path d="M999 600l25 12 20 330-24-12z" fill="#999"/>
                    <path d="M1020 930q1 13 10 17l26 10-12-15z" fill="url(#r4)"/>
                    <path d="M1041 584q-18 7-17 26l20 332q2 20 18 16l298-88q20-7 18-27l-21-333q-2-16-15-13z" fill="#b9b9b9" stroke="#333"/>
                    <path d="M1041 584l-23-11 295-89q5-1 10 1l19 12M1018 573q-19 6-19 27l21 330q1 13 10 17l30 11M999 600l25 12M1020 930l24 12M1311 485l24 12" fill="none" stroke="#333"/>
                    <g fill="url(#ho)" stroke="#333">
                        <ellipse cx="1057" cy="616" rx="15" ry="12" transform="rotate(-63 1057 616)"/>
                        <ellipse cx="1326" cy="537" rx="15" ry="12" transform="rotate(-63 1326 537)"/>
                        <ellipse cx="1346" cy="839" rx="15" ry="12" transform="rotate(-63 1346 839)"/>
                        <ellipse cx="1076" cy="918" rx="15" ry="12" transform="rotate(-63 1076 918)"/>
                    </g>
                    <g fill="none" stroke="#1c1c1c">
                        <ellipse cx="1203" cy="728" rx="170" ry="136" transform="rotate(-63.500 1203 728)" fill="#2a2a2a"/>
                        <ellipse cx="1205" cy="729" rx="167" ry="134" transform="rotate(-63.500 1205 729)" stroke="url(#rim)"/>
                        <ellipse cx="1205" cy="729" rx="135" ry="108" transform="rotate(-63.500 1205 729)" stroke="url(#groove)" stroke-width="2"/>
                        <ellipse cx="1204" cy="729" rx="106" ry="85" transform="rotate(-63.500 1204 729)" stroke="url(#groove)" stroke-width="2"/>
                        <ellipse cx="1205" cy="730" rx="41" ry="33" transform="rotate(-63.500 1205 730)" fill="#1d1d1d" stroke="#333"/>
                        <ellipse cx="1212" cy="733" rx="39" ry="31" transform="rotate(-63.500 1212 733)" fill="#262626" stroke="#555"/>
                        <path d="M1181 748c-4-38 30-60 52-48" stroke="#eee"/>
                    </g>
                    <path d="M1225 702l55 26 50 25-40 52-8-2-79-38c-24-10-20-62 22-63z" fill="url(#sh)"/>
                    <path d="M1203 765c-24-10-20-62 22-63" fill="none" stroke="#8fa8ae" stroke-width="2"/>
                    <ellipse cx="1299" cy="775" rx="32" ry="26" transform="rotate(-63.500 1299 775)" fill="url(#ch)" stroke="#333"/>
                    <ellipse cx="1302" cy="777" rx="28" ry="22" transform="rotate(-63.500 1302 777)" fill="#b9b9b9" stroke="#333"/>
                    <ellipse cx="1303" cy="777" rx="10" ry="8" transform="rotate(-63.500 1303 777)" fill="url(#ho)" stroke="#333"/>
                    <path d="M1314 779l14-3-6 11-7-3z" fill="#2a2a2a"/>
                    <path d="M1313 765l11-4q3-8 8-7 6 4 6 16l-2 6-22 4z" fill="url(#key)" stroke="#333"/>

                    <!-- work coordinate system -->
                    <g fill="none" stroke="#e0e0e0">
                        <path d="M858 559l58-16M858 559l4 62M858 559l38 18M893 549l23 11-35 11 2 38-22-10 34-11-2-39"/>
                        <path d="M928 539l-14 2 1 4zM862 635l-3-14h6zM903 582l-10-7-3 4z" fill="#e8e8e8"/>
                    </g>
                    <g class="axis" fill="#e8e8e8"><text x="928" y="541">Y</text><text x="903" y="587">Z</text><text x="859" y="647">X</text></g>

                    <!-- view triad -->
                    <path d="M341 951l19-8 15 7 1 24-22 7-15-7z" fill="#bbb" fill-opacity=".5" stroke="#aaa"/>
                    <path d="M341 951l13 7 21-8M354 958v23M360 943v24l16 7M360 967l-21 7" fill="none" stroke="#aaa"/>
                    <path d="M339 948l27-7" stroke="#2c9c34" stroke-width="3"/><path d="M376 939l-10-1 1 6z" fill="#2c9c34"/>
                    <path d="M337 953l2 31" stroke="#b02028" stroke-width="2"/><path d="M340 991l-3-11h6z" fill="#b02028"/>
                    <path d="M339 951l15 7" stroke="#0838e8" stroke-width="4"/><path d="M363 962l-9-8-4 7z" fill="#0838e8"/>
                    <circle cx="337" cy="949" r="4" fill="#ccc"/>
                    <g class="axis"><text x="375" y="941" fill="#2c9c34">Y</text><text x="361" y="967" fill="#0838e8">Z</text><text x="336" y="1000" fill="#c02830">X</text></g>
                </svg>
            </div>
        </section>
    </main>

    <footer class="status">
        <span>Select objects and use MB3, or double-click an object</span>
        <button aria-label="Finish"><svg><use href="#flag"/></svg></button>
        <button aria-label="Full Screen"><svg><use href="#full"/></svg></button>
    </footer>

    <div class="taskbar">
        <button class="start" aria-label="Start"><svg><use href="#start"/></svg></button>
        <div class="search"><svg><use href="#find"/></svg><input type="text" placeholder="Type here to search" aria-label="Type here to search"></div>
        <div class="apps">
            <button class="running" aria-label="Opera"><svg><use href="#opera"/></svg></button>
            <button aria-label="File Explorer"><svg><use href="#explorer"/></svg></button>
            <button aria-label="Alarms"><svg><use href="#alarm"/></svg></button>
            <button aria-label="Edge"><svg><use href="#edge"/></svg></button>
            <button class="running focused" aria-label="NX 12"><svg><use href="#nx"/></svg></button>
        </div>
        <div class="tray">
            <button aria-label="Show hidden icons"><svg><use href="#up"/></svg></button>
            <button aria-label="Battery"><svg><use href="#battery"/></svg></button>
            <button aria-label="Volume"><svg><use href="#volume"/></svg></button>
            <button aria-label="Network"><svg><use href="#wifi"/></svg></button>
            <button class="lang">ENG</button>
            <div class="time">11:22 AM<br>3/11/2021</div>
            <button class="notes" aria-label="Notifications"><svg><use href="#note"/></svg><span class="badge">1</span></button>
        </div>
    </div>

</body>
</html>
```
FILE: styles.css
```css
*{
    box-sizing: border-box;
}
body{
    margin: 0;
    height: 100vh;
    display: flex;
    flex-direction: column;
    overflow: hidden;
    background: #fff;
    color: #222;
    font-family: "Noto Sans", "Open Sans", sans-serif;
    font-size: 11px;
    line-height: 14px;
}
button, input, select{
    font: inherit;
    color: inherit;
    margin: 0;
    padding: 0;
    border: 0;
    background: none;
}
a{
    color: inherit;
    text-decoration: none;
}
h1, h2{
    margin: 0;
    font-weight: 400;
}
svg{
    width: 16px;
    height: 16px;
    flex: none;
    display: block;
}
.sprite{
    position: absolute;
    width: 0;
    height: 0;
}
.vline{
    width: 1px;
    height: 20px;
    background: #d8d8d8;
}
.caret, .drop::after{
    content: "";
    width: 0;
    height: 0;
    border: 3px solid transparent;
    border-top-color: #222;
    border-bottom: 0;
}
.drop{
    width: 10px;
    display: flex;
    flex-direction: column;
    align-items: center;
    justify-content: center;
}
.drop.bar::before{
    content: "";
    width: 6px;
    height: 1px;
    margin-bottom: 2px;
    background: #222;
}
.drop.flip::after{
    border: 3px solid transparent;
    border-bottom-color: #aaa;
    border-top: 0;
}

/* title bar */
.titlebar{
    height: 26px;
    display: flex;
    align-items: center;
    padding: 0 2px 0 0;
}
.titlebar .vline{
    margin: 0 2px;
}
.logo{
    width: 40px;
    padding-left: 3px;
    color: #8399aa;
    font-size: 21px;
    font-weight: 700;
}
.tool{
    width: 24px;
    display: flex;
    justify-content: center;
}
.texttool{
    display: flex;
    align-items: center;
    gap: 5px;
    margin-left: 5px;
    font-size: 12px;
}
.titlebar h1{
    flex: 1;
    text-align: center;
    font-size: 12px;
    color: #111;
}
.siemens{
    margin-right: 20px;
    padding-top: 3px;
    color: #009999;
    font-family: "Open Sans", sans-serif;
    font-size: 13px;
    font-weight: 800;
}
.winbtn{
    width: 24px;
    height: 24px;
    display: flex;
    align-items: center;
    justify-content: center;
}

/* ribbon tabs */
.tabs{
    height: 26px;
    display: flex;
    align-items: stretch;
    gap: 1px;
    padding-right: 5px;
    background: #dcdcdc;
    font-size: 12px;
    line-height: 26px;
}
.tabs a{
    padding: 0 13px;
}
.tabs .file{
    width: 59px;
    margin-right: 1px;
    padding: 0 19px;
    background: #549fb7;
    color: #fff;
}
.tabs .active{
    background: #fff;
    color: #00688b;
    border-top: 1px solid #777;
}
.finder{
    width: 112px;
    height: 18px;
    margin: 4px 4px 0 auto;
    display: flex;
    align-items: center;
    border: 1px solid #999;
    background: #fff;
}
.finder input{
    width: 94px;
    padding-left: 3px;
    font-size: 11px;
    line-height: 14px;
}
.finder input::placeholder{
    color: #aaa;
}
.tabs .winbtn{
    margin-left: 1px;
}

/* ribbon */
.ribbon{
    height: 86px;
    display: flex;
    border-bottom: 1px solid #dcdcdc;
}
.group{
    position: relative;
    display: flex;
    flex-direction: column;
    padding: 5px 4px 0 7px;
    background: linear-gradient(#d8d8d8, #d8d8d8) right 5px / 1px 76px no-repeat;
}
.group.g-sketch{
    padding: 5px 3px 0 1px;
}
.group.g-sync{
    padding-left: 5px;
}
.group.g-surface{
    padding: 5px 1px 0 0;
}
.group.g-assy{
    padding-left: 9px;
}
.g-sketch{
    width: 180px;
}
.g-feature{
    width: 425px;
}
.g-sync{
    width: 199px;
}
.g-assy{
    width: 249px;
}
.items{
    height: 67px;
    display: flex;
    align-items: flex-start;
}
.label{
    display: flex;
    align-items: center;
    justify-content: center;
    height: 12px;
    padding-right: 16px;
    color: #00688b;
}
.label .caret{
    position: absolute;
    right: 9px;
    bottom: 9px;
}
.big{
    display: flex;
    flex-direction: column;
    align-items: center;
    line-height: 13px;
    white-space: nowrap;
}
.big svg{
    width: 32px;
    height: 32px;
    margin-bottom: 4px;
}
.big > .caret{
    margin-top: 5px;
}
.big span{
    display: flex;
    align-items: center;
    gap: 3px;
}
.big:disabled{
    color: #bbb;
}
.lower{
    padding-top: 6px;
}
.w58{
    width: 58px;
}
.w42{
    width: 42px;
}
.w46{
    width: 46px;
}
.w48{
    width: 48px;
}
.w52{
    width: 52px;
}
.more{
    width: 40px;
}
.more svg{
    width: 38px;
    height: 34px;
    margin-bottom: 2px;
    padding: 8px 9px;
    border: 1px solid #d8d8d8;
    border-radius: 3px;
}
.gallery{
    width: 98px;
    height: 66px;
    display: grid;
    grid-template-columns: repeat(3, 1fr);
    place-items: center;
    border: 1px solid #dcdcdc;
}
.gallery svg{
    width: 22px;
    height: 22px;
}
.scroller{
    width: 18px;
    height: 66px;
    display: flex;
    flex-direction: column;
    align-items: center;
    justify-content: space-around;
}
.list{
    display: flex;
    flex-direction: column;
}
.list button{
    height: 22px;
    padding-bottom: 8px;
    display: flex;
    align-items: center;
    gap: 5px;
    white-space: nowrap;
}
.list .caret{
    margin-left: 3px;
}
.l1{
    width: 110px;
    padding-left: 5px;
}
.l2{
    width: 83px;
    padding-left: 4px;
    margin-left: 1px;
}
.l3{
    width: 104px;
    padding-left: 2px;
}
.l4{
    padding-left: 4px;
}
.ribbon .end, .selbar .end{
    margin: auto 4px 4px auto;
    height: 10px;
}

/* selection bar */
.selbar{
    height: 29px;
    display: flex;
    align-items: center;
    border-bottom: 1px solid #8a9499;
}
.selbar .menu{
    width: 65px;
    margin: 0 0 0 10px;
    gap: 4px;
    font-size: 11px;
}
.pick{
    position: relative;
    height: 18px;
    border: 1px solid #999;
}
.pick select{
    width: 100%;
    height: 16px;
    padding-left: 4px;
    appearance: none;
}
.pick::after{
    content: "";
    position: absolute;
    right: 5px;
    top: 6px;
    border: 4px solid transparent;
    border-top-color: #222;
    border-bottom: 0;
    pointer-events: none;
}
.p1{
    width: 121px;
    margin-left: 12px;
}
.p2{
    width: 127px;
    margin-left: 9px;
}
.icons{
    display: flex;
    align-items: center;
    gap: 1px;
    margin-left: 4px;
}
.icons button{
    width: 24px;
    height: 23px;
    display: flex;
    align-items: center;
    justify-content: center;
}
.icons .tight{
    width: 20px;
}
.icons .drop{
    width: 11px;
}
.icons .on{
    background: #cde6ea;
    border: 1px solid #a8d4dc;
}
.icons .vline{
    margin: 0 6px;
}

/* work area */
.workspace{
    flex: 1;
    min-height: 0;
    display: flex;
}
.rail{
    width: 32px;
    display: flex;
    flex-direction: column;
    background: #dcdcdc;
    border-right: 1px solid #aaa;
}
.rail button{
    width: 31px;
    height: 42px;
    padding-left: 4px;
    display: flex;
    align-items: center;
    justify-content: center;
}
.rail svg{
    width: 23px;
    height: 23px;
}
.rail .cog{
    height: 28px;
    margin-bottom: 12px;
    padding: 0 2px 2px 0;
}
.rail .cog svg{
    width: 14px;
    height: 14px;
}
.rail .current{
    height: 46px;
    width: 30px;
    margin: 0 -1px -3px 2px;
    padding-left: 2px;
    background: #fff;
    border: 1px solid #aaa;
    border-right: 0;
}
.rail .apart{
    margin-top: 12px;
}
.navigator{
    width: 239px;
    display: flex;
    flex-direction: column;
    padding: 0 10px 6px 6px;
    border-right: 1px solid #8a9499;
}
.navhead{
    height: 28px;
    display: flex;
    align-items: center;
    justify-content: space-between;
    padding: 2px 4px 0;
}
.navhead h2{
    font-size: 12px;
}
.tree{
    flex: 1;
    display: flex;
    flex-direction: column;
    padding: 1px 1px 2px;
    border: 1px solid #d0d0d0;
}
table{
    width: 100%;
    border-collapse: collapse;
}
th{
    height: 19px;
    padding: 0 6px;
    text-align: left;
    font-weight: 400;
    background: #eee;
    border-bottom: 1px solid #c8c8c8;
}
td{
    height: 20px;
    padding: 0;
    border-bottom: 1px solid #e4e4e4;
}
tr:nth-child(2) td{
    background: #fafafa;
}
.node{
    display: flex;
    align-items: center;
    gap: 4px;
    height: 19px;
    padding-left: 9px;
}
.branch{
    width: 9px;
    height: 10px;
    margin-right: -3px;
    border: 0 dotted #999;
    border-left-width: 1px;
}
.n1 .branch{
    align-self: flex-end;
    border-top-width: 1px;
}
.n2 .branch{
    align-self: flex-start;
    margin-right: -1px;
    border-bottom-width: 1px;
}
.n2{
    font-weight: 700;
}
.n2 svg{
    width: 14px;
    height: 14px;
}
.n2 input{
    appearance: none;
    width: 12px;
    height: 12px;
    border: 1px solid #222;
    background: #fff;
    position: relative;
}
.n2 input:checked::after{
    content: "";
    position: absolute;
    left: 3px;
    top: 0;
    width: 4px;
    height: 8px;
    border: solid #d8141c;
    border-width: 0 2px 2px 0;
    transform: rotate(40deg);
}
.rows{
    flex: 1;
    background: repeating-linear-gradient(#fff 0 19px, #e4e4e4 19px 20px, #fafafa 20px 39px, #e4e4e4 39px 40px);
}
.hscroll{
    height: 16px;
    display: flex;
    background: #f0f0f0;
}
.hscroll button{
    width: 17px;
    display: flex;
    align-items: center;
    justify-content: center;
}
.hscroll svg{
    width: 10px;
    height: 10px;
    fill: none;
    stroke: #444;
    stroke-width: 2;
}
.track{
    flex: 1;
}
.thumb{
    width: 48%;
    height: 16px;
    background: #cdcdcd;
}
.splitter{
    height: 4px;
    background: #e0e0e0;
    border: 1px solid #aaa;
}
.fold{
    height: 24px;
    display: flex;
    align-items: center;
    justify-content: space-between;
    padding: 0 5px 0 7px;
    color: #00688b;
    font-size: 12px;
    border-bottom: 2px solid #d4d4d4;
}
.fold svg{
    width: 12px;
    height: 12px;
    fill: none;
    stroke: #00688b;
    stroke-width: 2;
}
.graphics{
    flex: 1;
    min-width: 0;
    display: flex;
    flex-direction: column;
}
.docs{
    height: 21px;
    display: flex;
    align-items: stretch;
    border-bottom: 2px solid #549fb7;
}
.doc{
    display: flex;
    align-items: center;
    gap: 6px;
    padding: 0 20px 0 7px;
}
.doc svg{
    width: 14px;
    height: 14px;
}
.doc.open{
    gap: 5px;
    padding-right: 4px;
    background: #549fb7;
    color: #fff;
}
.doc .x{
    width: 12px;
    height: 12px;
}
.canvas{
    flex: 1;
    min-height: 0;
    background: linear-gradient(#b4b4b6 0, #e4e5e7 75%, #e6e8ea 100%);
}
.canvas svg{
    width: 100%;
    height: 100%;
}
.axis{
    font-family: "Liberation Sans", sans-serif;
    font-size: 13px;
}

/* status line */
.status{
    height: 22px;
    display: flex;
    align-items: center;
    gap: 4px;
    padding: 0 55px 2px 3px;
    border-top: 1px solid #a0a0a0;
    font-family: "Open Sans", sans-serif;
    font-weight: 600;
    color: #111;
}
.status span{
    flex: 1;
}

/* windows taskbar */
.taskbar{
    height: 40px;
    display: flex;
    background: linear-gradient(90deg, #d4e0e8 0, #d4e0e8 20%, #cbebe6 22%, #cbe9e6 26%, #d2dee8 30%, #d0dde6 50%, #cfe4e8 65%, #d0dfe6 100%);
    color: #111;
}
.taskbar button{
    display: flex;
    align-items: center;
    justify-content: center;
}
.start{
    width: 48px;
}
.search{
    width: 344px;
    display: flex;
    align-items: center;
    gap: 12px;
    padding-left: 11px;
    background: #fff;
    border: 1px solid #bbb;
}
.search input{
    flex: 1;
    font-size: 14px;
}
.search input::placeholder{
    color: #333;
}
.apps{
    display: flex;
    margin-left: 2px;
}
.apps button{
    width: 49px;
    border-bottom: 3px solid transparent;
    padding-top: 3px;
}
.apps svg{
    width: 24px;
    height: 24px;
}
.apps .running{
    border-bottom-color: #d83a28;
}
.apps .focused{
    background: #ecf2f7;
}
.tray{
    margin-left: auto;
    display: flex;
    align-items: center;
    padding-right: 3px;
}
.tray button{
    width: 25px;
    height: 40px;
}
.tray .lang{
    width: 32px;
    font-size: 12px;
}
.time{
    width: 72px;
    text-align: center;
    line-height: 18px;
}
.tray .notes{
    position: relative;
    width: 48px;
    border-right: 1px solid #9ab;
}
.tray .notes svg{
    margin-right: 8px;
}
.badge{
    position: absolute;
    right: 11px;
    bottom: 4px;
    width: 16px;
    height: 16px;
    border-radius: 50%;
    border: 1px solid #777;
    background: #ccc;
    line-height: 14px;
}
```
